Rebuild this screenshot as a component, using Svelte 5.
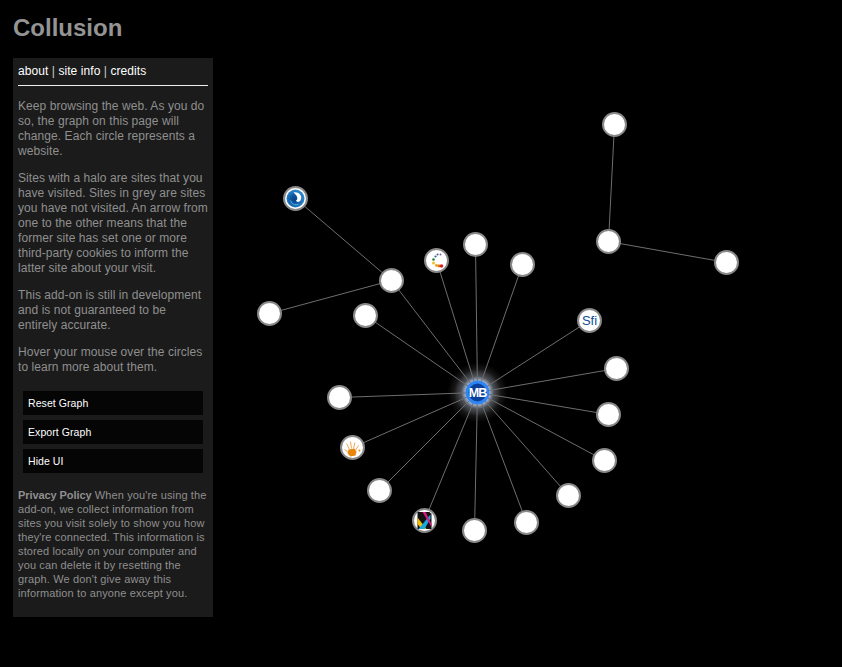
<script>
  const hub = { x: 477, y: 392 };

  const plain = [
    [614, 124], [608, 241], [726, 262], [391, 280], [269, 313], [365, 315],
    [475, 244], [522, 264], [616, 368], [608, 414], [604, 460], [568, 495],
    [526, 522], [474, 530], [379, 490], [339, 397],
  ];

  const spokes = [
    [391, 280], [365, 315], [436, 260], [475, 244], [522, 264], [589, 320],
    [616, 368], [608, 414], [604, 460], [568, 495], [526, 522], [474, 530],
    [424, 520], [379, 490], [352, 447], [339, 397],
  ];

  const links = [
    [614, 124, 608, 241],
    [608, 241, 726, 262],
    [295, 198, 391, 280],
    [391, 280, 269, 313],
    ...spokes.map(([x, y]) => [hub.x, hub.y, x, y]),
  ];

  // x, y, r, colour of the dots in the ring logo
  const dots = [
    [4, -6, 1, '#8a5fa8'], [1, -6, 1, '#3c5fa0'], [-1, -4, 1.1, '#2f6f8f'], [-3, -1, 1.3, '#2e7d32'],
    [-3, 2.5, 1.5, '#f0c020'], [0, 5, 1.4, '#e8a018'], [2.5, 5.5, 1.4, '#e07010'], [5, 5.5, 1.8, '#d8201c'],
  ];
</script>

<div class="page">
  <h1>Collusion</h1>

  <aside class="panel">
    <nav class="tabs">
      <a href="#about">about</a> | <a href="#info">site info</a> | <a href="#credits">credits</a>
    </nav>

    <p>Keep browsing the web. As you do so, the graph on this page will change. Each circle represents a website.</p>
    <p>Sites with a halo are sites that you have visited. Sites in grey are sites you have not visited. An arrow from one to the other means that the former site has set one or more third-party cookies to inform the latter site about your visit.</p>
    <p>This add-on is still in development and is not guaranteed to be entirely accurate.</p>
    <p>Hover your mouse over the circles to learn more about them.</p>

    <div class="buttons">
      <div class="btn">Reset Graph</div>
      <div class="btn">Export Graph</div>
      <div class="btn">Hide UI</div>
    </div>

    <p class="privacy"><strong>Privacy Policy</strong> When you're using the add-on, we collect information from sites you visit solely to show you how they're connected. This information is stored locally on your computer and you can delete it by resetting the graph. We don't give away this information to anyone except you.</p>
  </aside>

  <svg class="graph" width="842" height="667" viewBox="-0.5 -0.5 842 667">
    <defs>
      <radialGradient id="halo">
        <stop offset="0.35" stop-color="#cfe0ff" stop-opacity="0.95" />
        <stop offset="0.55" stop-color="#cfdcf0" stop-opacity="0.36" />
        <stop offset="0.78" stop-color="#fff" stop-opacity="0.09" />
        <stop offset="1" stop-color="#fff" stop-opacity="0" />
      </radialGradient>
      <radialGradient id="swirl" cx="0.45" cy="0.55">
        <stop offset="0" stop-color="#083f80" />
        <stop offset="0.5" stop-color="#0d5ca6" />
        <stop offset="1" stop-color="#2a86c8" />
      </radialGradient>
    </defs>

    <circle cx={hub.x} cy={hub.y} r="30" fill="url(#halo)" />

    {#each links as [x1, y1, x2, y2]}
      <line {x1} {y1} {x2} {y2} stroke="#6e6e6e" stroke-width="1" />
    {/each}

    {#each plain as [cx, cy]}
      <circle {cx} {cy} r="11.5" fill="#fff" stroke="#888" stroke-width="2" />
    {/each}

    <!-- hub -->
    <g transform="translate(477 392)">
      <circle r="10.5" fill="#0b3f9c" stroke="#2f86f2" stroke-width="3" />
      <text class="hub-label" y="4.5" text-anchor="middle">MB</text>
    </g>

    <!-- swirl -->
    <g transform="translate(295 198)">
      <circle r="11.5" fill="#fff" stroke="#888" stroke-width="2" />
      <circle r="9" fill="url(#swirl)" />
      <path d="M-2-6C3-7 7-3 5.500 1 4.500 4 1 4 .5 2 3 1 2-3-2-6z" fill="#fff" />
      <path d="M-5 2a5.500 5.500 0 0 0 8 3.500" fill="none" stroke="#58a8e0" stroke-width="1" />
    </g>

    <!-- dotted ring -->
    <g transform="translate(436 260)">
      <circle r="11.5" fill="#fff" stroke="#888" stroke-width="2" />
      {#each dots as [cx, cy, r, fill]}
        <circle {cx} {cy} {r} {fill} />
      {/each}
    </g>

    <!-- sfi -->
    <g transform="translate(589 320)">
      <circle r="11.5" fill="#fff" stroke="#888" stroke-width="2" />
      <text class="sfi-label" y="4.5" text-anchor="middle">Sfi</text>
    </g>

    <!-- hand -->
    <g transform="translate(352 447)">
      <circle r="11.5" fill="#fff" stroke="#888" stroke-width="2" />
      <path d="M-4 2l6-1 2 3-1 4-5 1-3-3z" fill="#e8860c" />
      <path d="M-3 2l-3-6M-1 1l-1-7M1 1l1.500-6M3 3l3-5M-4 5l-4-3" fill="none" stroke="#f0a850" stroke-width="1" />
      <circle cx="7" cy="3" r="1" fill="#e8860c" />
    </g>

    <!-- cmyk -->
    <g transform="translate(424 520)">
      <circle r="11.5" fill="#fff" stroke="#888" stroke-width="2" />
      <rect x="-7" y="-8.5" width="14" height="17" fill="#111" />
      <path d="M-7-3l9 11.500h-5l-4-5z" fill="#f0c000" />
      <path d="M-6 8.500L6-6v4L0 8.500z" fill="#18a8e0" />
      <path d="M-2-8.500h3l6 12v3z" fill="#e0187c" />
      <path d="M7-8.500v2l-2-2z" fill="#fff" />
    </g>
  </svg>
</div>

<style>
  :global(body) {
    margin: 0;
    background: #000;
  }
  .page {
    position: relative;
    width: 842px;
    height: 667px;
    overflow: hidden;
    padding: 14px 0 0 13px;
    box-sizing: border-box;
    font-family: "Liberation Sans", Arial, sans-serif;
    color: #8f8f8f;
  }
  h1 {
    margin: 0;
    font-size: 24px;
    line-height: 28px;
    font-weight: bold;
    color: #949494;
  }
  .panel {
    position: relative;
    z-index: 1;
    box-sizing: border-box;
    width: 200px;
    height: 559px;
    margin-top: 16px;
    padding: 6px 5px 5px;
    background: #1b1b1b;
    font-size: 12px;
    line-height: 15px;
    letter-spacing: 0.07px;
  }
  .tabs {
    color: #ccc;
    padding-bottom: 6px;
    border-bottom: 1px solid #eee;
    margin-bottom: 13px;
  }
  .tabs a {
    color: #fff;
    text-decoration: none;
  }
  p {
    margin: 0 0 12px;
  }
  .buttons {
    display: flex;
    flex-direction: column;
    gap: 5px;
    margin: 16px 5px 15px;
  }
  .btn {
    height: 24px;
    line-height: 24px;
    padding-left: 5px;
    background: #050505;
    color: #fff;
    font-size: 10.5px;
  }
  .privacy {
    font-size: 11px;
    line-height: 14px;
    letter-spacing: 0.13px;
  }
  .privacy strong {
    letter-spacing: -0.08px;
  }
  .graph {
    position: absolute;
    left: 0;
    top: 0;
  }
  .hub-label {
    font-family: "Liberation Sans", Arial, sans-serif;
    font-size: 12.5px;
    font-weight: bold;
    fill: #fff;
    letter-spacing: -1px;
  }
  .sfi-label {
    font-family: "Liberation Sans", Arial, sans-serif;
    font-size: 13px;
    fill: #0f4f96;
  }
</style>
